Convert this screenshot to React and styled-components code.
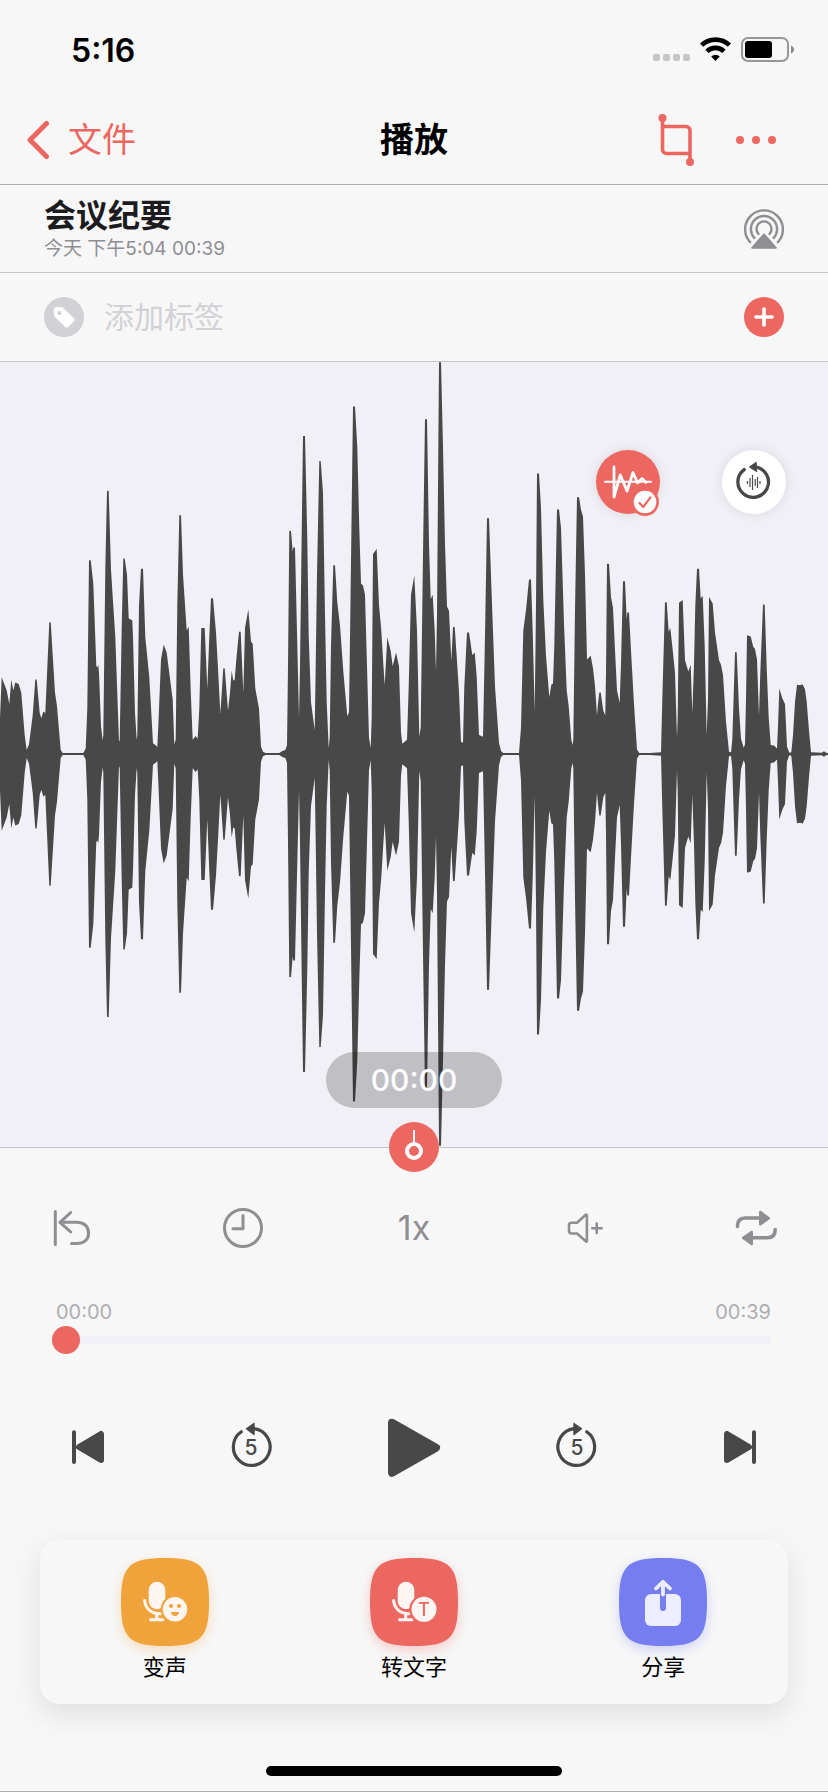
import React, { useState } from "react";
import styled, { createGlobalStyle } from "styled-components";

// Waveform envelope, sampled in three chunks. Each point is "x,level":
// x is in thirds of a pixel from `start`, amplitude is (base - level) / gain.
const WAVE_WIDTH = 828;
const WAVE_HEIGHT = 785;
const WAVE_MIDDLE = 392;

const chunks = [
    {
        start: 0,
        base: 882,
        gain: 2.24,
        points: "0,800 5,710 20,740 28,770 34,715 40,740 46,722 56,725 64,745 74,840 80,873 87,860 98,795 106,715 110,715 119,790 124,802 130,787 136,790 148,587 152,587 165,745 171,775 182,873 188,880 250,880 257,870 262,780 267,448 272,448 280,500 289,685 292,688 295,682 297,700 303,820 308,852 310,840 316,470 321,293 326,293 333,470 346,620 357,855 359,850 365,600 370,444 374,444 381,480 386,578 397,583 399,620 405,790 410,850 412,840 417,550 423,467 429,467 436,620 448,710 459,858 468,863 472,866 475,820 483,670 491,637 500,655 518,760 523,860 527,850 532,550 538,347 543,347 549,480 560,605 566,597 572,740 578,850 587,842 593,848 598,780 604,600 614,600 622,735 628,620 633,533 639,533 648,610 654,690 661,790 664,760 670,690 674,690 684,785 690,745 695,695 700,718 704,715 709,670 717,608 722,608 730,745 735,600 745,558 753,630 758,635 766,735 777,780 783,865 789,877 797,880",
    },
    {
        start: 270,
        base: 772,
        gain: 1.96,
        points: "0,770 28,770 37,766 46,764 51,755 54,600 58,335 63,335 68,375 70,367 75,367 78,450 87,700 90,600 94,400 99,149 105,149 112,350 116,540 123,670 134,725 137,600 141,420 148,198 152,198 159,260 165,500 170,670 176,760 179,740 183,560 190,402 195,402 202,475 210,520 220,610 232,698 237,690 241,500 249,91 255,91 262,170 268,330 273,438 279,442 285,460 291,600 297,740 302,760 305,700 309,380 320,370 327,480 334,530 340,595 344,637 352,543 362,570 368,600 378,573 387,600 393,730 397,752 404,748 411,744 416,640 423,460 433,422 441,530 448,738 452,720 459,380 465,116 471,116 477,360 482,468 488,460 494,530 498,610 501,500 507,4 513,4 519,170 525,360 531,483 537,492 544,590 549,523 554,523 561,590 567,650 573,748 579,750 583,640 591,534 597,534 607,578 614,573 620,620 627,735 639,738 645,540 651,310 657,310 664,440 675,640 687,750 693,766 700,770 747,770 753,720 760,530 768,490 777,430 783,430 788,530 794,690 798,480 801,222 807,222 813,290 820,470 828,580",
    },
    {
        start: 540,
        base: 882,
        gain: 2.24,
        points: "28,755 34,727 39,724 43,640 51,334 57,334 63,375 72,590 80,740 86,775 94,850 98,862 100,850 105,560 111,307 117,307 123,335 129,350 135,480 141,670 152,662 159,690 165,730 171,795 174,770 178,744 182,744 190,785 196,795 198,700 201,456 207,456 213,530 219,555 225,650 231,740 239,768 243,680 249,495 255,495 260,580 262,565 267,565 273,650 282,770 291,872 298,880 330,880 363,878 367,760 375,542 380,542 386,608 391,600 397,640 405,700 411,845 413,800 417,543 428,537 435,672 445,697 452,682 457,790 462,680 466,550 471,467 477,467 482,533 488,528 494,640 500,840 504,760 507,530 518,545 525,610 537,672 543,682 549,705 558,810 567,877 573,878 577,850 585,654 590,654 597,780 603,848 611,868 615,860 618,760 621,616 632,619 640,642 645,647 651,670 657,795 661,700 669,547 674,547 680,690 686,800 692,862 702,863 711,870 714,820 718,735 727,757 735,770 741,865 748,879 754,878 759,840 765,765 771,727 780,728 788,726 795,737 800,765 807,830 813,878 845,879 852,876 858,879 864,880",
    },
];

const envelope = chunks.flatMap(({ start, base, gain, points }) =>
    points.split(" ").map((pair) => {
        const [x, level] = pair.split(",").map(Number);
        return [start + x / 3, (base - level) / gain];
    })
);

const wavePoints = [
    ...envelope.map(([x, a]) => [x, WAVE_MIDDLE - a]),
    ...[...envelope].reverse().map(([x, a]) => [x, WAVE_MIDDLE + a]),
]
    .map(([x, y]) => `${x.toFixed(1)},${y.toFixed(1)}`)
    .join(" ");

const SQUIRCLE = "M0 44C0 8 8 0 44 0S88 8 88 44 80 88 44 88 0 80 0 44Z";

const StatusIcons = () => (
    <svg width="141" height="26" viewBox="0 0 141 26" aria-hidden="true">
        {[0, 10, 20, 30].map((x) => (
            <rect key={x} x={x} y="17" width="7" height="7" rx="2" fill="#c6c6c6" />
        ))}
        <g fill="none" stroke="#000" strokeWidth="4.6">
            <path d="M48.6 8.2a20 20 0 0 1 27.8 0" />
            <path d="M54 14.4a12 12 0 0 1 17 0" />
        </g>
        <path d="M58.2 19.4a6.4 6.4 0 0 1 8.6 0L62.5 24Z" />
        <rect
            x="89" y="1" width="46" height="23" rx="6"
            fill="none" stroke="#979797" strokeWidth="2"
        />
        <rect x="92" y="4" width="27" height="17" rx="3" />
        <path d="M138 8.5c4 1.8 4 6.2 0 8Z" fill="#8a8a8a" />
    </svg>
);

const ChevronIcon = () => (
    <svg width="24" height="40" viewBox="0 0 24 40" aria-hidden="true">
        <path
            d="M20.5 3.5 4 20 20.5 36.5"
            fill="none" stroke="currentColor" strokeWidth="5"
            strokeLinecap="round" strokeLinejoin="round"
        />
    </svg>
);

const CropIcon = () => (
    <svg width="40" height="54" viewBox="0 0 40 54" aria-hidden="true">
        <g fill="none" stroke="currentColor" strokeWidth="3.6">
            <path d="M6.5 5V36.5a4 4 0 0 0 4 4H34" />
            <path d="M6.5 13.5H30a4 4 0 0 1 4 4V49" />
        </g>
        <circle cx="6.5" cy="5" r="4" fill="currentColor" />
        <circle cx="34" cy="49" r="4" fill="currentColor" />
    </svg>
);

const DotsIcon = () => (
    <svg width="40" height="10" viewBox="0 0 40 10" aria-hidden="true">
        {[4, 20, 36].map((x) => (
            <circle key={x} cx={x} cy="5" r="4" fill="currentColor" />
        ))}
    </svg>
);

const AirplayIcon = () => (
    <svg width="40" height="40" viewBox="0 0 40 40" aria-hidden="true">
        <g fill="none" stroke="currentColor" strokeWidth="2.4" strokeLinecap="round">
            <path d="M6.2 33.2a18.9 18.9 0 1 1 27.6 0" />
            <path d="M10.3 28.9a13.1 13.1 0 1 1 19.4 0" />
            <path d="M14.4 24.9a7.5 7.5 0 1 1 11.2 0" />
        </g>
        <path
            d="M20 25.5 31.8 38.8H8.2Z"
            fill="currentColor" stroke="currentColor" strokeWidth="2" strokeLinejoin="round"
        />
    </svg>
);

const TagIcon = () => (
    <svg width="40" height="40" viewBox="0 0 40 40" aria-hidden="true">
        <circle cx="20" cy="20" r="20" fill="#d1d1d6" />
        <path
            d="M12.5 10H17.2a3 3 0 0 1 2.1.9L30.3 21.5a1.6 1.6 0 0 1 0 2.3L24.2 30a2 2 0 0 1-2.9 0L10.7 19.7a3 3 0 0 1-.9-2.1V13a3 3 0 0 1 2.7-3Z"
            fill="#fff"
        />
        <circle cx="15.3" cy="16" r="2" fill="#d1d1d6" />
    </svg>
);

const PlusIcon = () => (
    <svg width="40" height="40" viewBox="0 0 40 40" aria-hidden="true">
        <circle cx="20" cy="20" r="20" fill="#ec6760" />
        <path d="M12 20H28M20 12V28" stroke="#fff" strokeWidth="3.6" strokeLinecap="round" />
    </svg>
);

const TrimSilenceIcon = () => (
    <svg width="66" height="66" viewBox="0 0 66 66" aria-hidden="true">
        <g fill="none" stroke="#fff" strokeLinecap="round" strokeLinejoin="round">
            <path d="M9 31.7H55" strokeWidth="2" />
            <path d="M18 17V47L24.3 25 31 41 37 22.5 41.5 33 46 28.5 50 32.5" strokeWidth="2.8" />
        </g>
        <circle cx="49" cy="52" r="14" fill="#ec6760" />
        <circle cx="49" cy="52" r="11.3" fill="#fff" />
        <path
            d="M43.5 53 47.2 57 54.5 47.3"
            fill="none" stroke="#ec6760" strokeWidth="2.2"
            strokeLinecap="round" strokeLinejoin="round"
        />
    </svg>
);

const RepeatWaveIcon = () => (
    <svg width="64" height="64" viewBox="0 0 64 64" aria-hidden="true">
        <path
            d="M22.2 19.6A15.3 15.3 0 1 0 33 16.8"
            fill="none" stroke="#484849" strokeWidth="3.3" strokeLinecap="round"
        />
        <path
            d="M27.3 17 34.2 12.3 34.8 21.7Z"
            fill="#484849" stroke="#484849" strokeLinejoin="round"
        />
        <path
            d="M25.5 31V34M28 28V37M30.5 25V40M33.2 29V36M35.5 27V38M38 31V34"
            stroke="#484849" strokeWidth="1.2"
        />
    </svg>
);

const MarkerIcon = () => (
    <svg width="50" height="50" viewBox="0 0 50 50" aria-hidden="true">
        <path d="M25 8V21" stroke="#fff" strokeWidth="2" />
        <circle cx="25" cy="29" r="7" fill="none" stroke="#fff" strokeWidth="4" />
    </svg>
);

const ToolIcon = ({ children }) => (
    <svg
        width="40" height="40" viewBox="0 0 40 40" overflow="visible"
        fill="none" stroke="currentColor" strokeWidth="3"
        strokeLinecap="round" strokeLinejoin="round" aria-hidden="true"
    >
        {children}
    </svg>
);

const TransportIcon = ({ children }) => (
    <svg
        width="64" height="64" viewBox="0 0 64 64"
        fill="currentColor" stroke="currentColor"
        strokeLinecap="round" strokeLinejoin="round" aria-hidden="true"
    >
        {children}
    </svg>
);

const SkipIcon = () => (
    <TransportIcon>
        <path d="M18 16.3V46" strokeWidth="4" />
        <path d="M23 31 45 18V44Z" strokeWidth="6" />
    </TransportIcon>
);

const JumpArrow = () => (
    <>
        <path d="M22.3 15.8A18.4 18.4 0 1 0 35 12.7" fill="none" strokeWidth="3.2" />
        <path d="M27.5 12.8 35 7.5V18.5Z" strokeWidth="1.4" />
    </>
);

const JumpLabel = () => (
    <text x="32" y="39" fontSize="21" fontWeight="500" textAnchor="middle" stroke="none">
        5
    </text>
);

const Mic = ({ children }) => (
    <g fill="#fff5f2">
        <rect x="27.7" y="23.7" width="16.6" height="27.6" rx="8.3" />
        <path
            d="M23.6 42.5C24.5 50.5 30 55.7 39.5 55.7M35.7 56V61M29.5 61.7H42"
            fill="none" stroke="#fff5f2" strokeWidth="3" strokeLinecap="round"
        />
        {children}
    </g>
);

const VoiceIcon = () => (
    <svg width="88" height="88" viewBox="0 0 88 88" aria-hidden="true">
        <path d={SQUIRCLE} fill="#f1a33b" />
        <Mic>
            <circle cx="54" cy="51.3" r="14.3" fill="#f1a33b" />
            <circle cx="54" cy="51.3" r="12.2" />
            <circle cx="50" cy="48" r="2.1" fill="#f1a33b" />
            <circle cx="58" cy="48" r="2.1" fill="#f1a33b" />
            <path d="M50 54H58C58 59.3 50 59.3 50 54Z" fill="#f1a33b" />
        </Mic>
    </svg>
);

const TranscribeIcon = () => (
    <svg width="88" height="88" viewBox="0 0 88 88" aria-hidden="true">
        <path d={SQUIRCLE} fill="#ec6760" />
        <Mic>
            <circle cx="54" cy="51.3" r="14.7" fill="#ec6760" />
            <circle cx="54" cy="51.3" r="12.5" />
            <text x="54" y="58" fontSize="18" fontWeight="500" textAnchor="middle" fill="#ec6760">
                T
            </text>
        </Mic>
    </svg>
);

const ShareIcon = () => (
    <svg width="88" height="88" viewBox="0 0 88 88" aria-hidden="true">
        <path d={SQUIRCLE} fill="#757df0" />
        <rect x="26" y="36" width="36" height="32" rx="6" fill="#eceeff" />
        <g fill="none" strokeLinecap="round" strokeLinejoin="round">
            <path d="M44 36V50" stroke="#757df0" strokeWidth="6" />
            <path d="M44 25V36.5M37 30.5 44 23.8 51 30.5" stroke="#eceeff" strokeWidth="3.8" />
        </g>
    </svg>
);

const actions = [
    { label: "变声", icon: <VoiceIcon />, glow: "rgba(241, 163, 59, 0.3)" },
    { label: "转文字", icon: <TranscribeIcon />, glow: "rgba(236, 103, 96, 0.3)" },
    { label: "分享", icon: <ShareIcon />, glow: "rgba(117, 125, 240, 0.3)" },
];

function App() {
    const [position, setPosition] = useState(0);
    const [tag, setTag] = useState("");

    return (
        <Screen>
            <GlobalStyle />
            <StatusBar>
                <Clock>5:16</Clock>
                <StatusIcons />
            </StatusBar>

            <NavBar>
                <BackLink href="#files">
                    <ChevronIcon />
                    文件
                </BackLink>
                <NavTitle>播放</NavTitle>
                <NavActions>
                    <IconButton aria-label="裁剪"><CropIcon /></IconButton>
                    <IconButton aria-label="更多"><DotsIcon /></IconButton>
                </NavActions>
            </NavBar>

            <InfoRow>
                <div>
                    <RecordingName>会议纪要</RecordingName>
                    <RecordingMeta>今天 下午5:04 00:39</RecordingMeta>
                </div>
                <IconButton $color="#8e8e93" aria-label="隔空播放"><AirplayIcon /></IconButton>
            </InfoRow>

            <InfoRow>
                <TagLabel>
                    <TagIcon />
                    <TagInput
                        aria-label="添加标签"
                        placeholder="添加标签"
                        value={tag}
                        onChange={(e) => setTag(e.target.value)}
                    />
                </TagLabel>
                <IconButton aria-label="新建标签"><PlusIcon /></IconButton>
            </InfoRow>

            <WavePanel>
                <WaveSvg viewBox={`0 0 ${WAVE_WIDTH} ${WAVE_HEIGHT}`} preserveAspectRatio="none">
                    <polygon points={wavePoints} fill="#484849" />
                </WaveSvg>
                <FloatingTools>
                    <RoundButton $color="#ec6760" aria-label="跳过静音" aria-pressed="true">
                        <TrimSilenceIcon />
                    </RoundButton>
                    <RoundButton $color="#fff" aria-label="片段循环">
                        <RepeatWaveIcon />
                    </RoundButton>
                </FloatingTools>
                <Playhead>
                    <TimePill>00:00</TimePill>
                    <Marker aria-label="添加标记"><MarkerIcon /></Marker>
                </Playhead>
            </WavePanel>

            <ToolRow>
                <ToolButton aria-label="回到开头">
                    <ToolIcon>
                        <path d="M3.3 3.5V36.5M18.7 4.5 8 14.3 18.7 24" />
                        <path d="M8 14.3H25C32.5 14.3 36.6 19 36.6 25S32.5 35.5 25 35.5H19.5" />
                    </ToolIcon>
                </ToolButton>
                <ToolButton aria-label="定时">
                    <ToolIcon>
                        <circle cx="20" cy="20" r="18.5" />
                        <path d="M20 7.5V20.8H10" />
                    </ToolIcon>
                </ToolButton>
                <ToolButton>1x</ToolButton>
                <ToolButton aria-label="音量增强">
                    <ToolIcon>
                        <path
                            d="M6.5 14.7H12L20.5 7Q21.9 6 21.9 7.5V32.8Q21.9 34.3 20.5 33L12 25.5H6.5Q4 25.5 4 23V17.2Q4 14.7 6.5 14.7ZM27.3 20.3H36.7M31.7 15.5V25"
                            strokeWidth="2.6"
                        />
                    </ToolIcon>
                </ToolButton>
                <ToolButton aria-label="循环播放">
                    <ToolIcon>
                        <path d="M1.5 18.5Q1.5 10 9 10H24M39.2 21.5Q39.2 29.7 31.5 29.7H16" strokeWidth="3.6" />
                        <path d="M24.3 4 32.7 10.2 24.3 16.3ZM15.7 24 7.3 29.9 15.7 36Z" fill="currentColor" strokeWidth="2.6" />
                    </ToolIcon>
                </ToolButton>
            </ToolRow>

            <Progress>
                <Times>
                    <span>00:00</span>
                    <span>00:39</span>
                </Times>
                <Slider
                    type="range"
                    min="0"
                    max="39"
                    value={position}
                    aria-label="播放进度"
                    onChange={(e) => setPosition(Number(e.target.value))}
                />
            </Progress>

            <Transport>
                <TransportButton aria-label="上一个"><SkipIcon /></TransportButton>
                <TransportButton aria-label="后退5秒">
                    <TransportIcon>
                        <JumpArrow />
                        <JumpLabel />
                    </TransportIcon>
                </TransportButton>
                <TransportButton aria-label="播放">
                    <TransportIcon>
                        <path d="M10 6.7 54 31.8 10 56.8Z" strokeWidth="8" />
                    </TransportIcon>
                </TransportButton>
                <TransportButton aria-label="前进5秒">
                    <TransportIcon>
                        <g transform="matrix(-1 0 0 1 64 0)">
                            <JumpArrow />
                        </g>
                        <JumpLabel />
                    </TransportIcon>
                </TransportButton>
                <TransportButton $flip aria-label="下一个"><SkipIcon /></TransportButton>
            </Transport>

            <ActionCard>
                {actions.map(({ label, icon, glow }) => (
                    <ActionButton key={label} $glow={glow}>
                        {icon}
                        {label}
                    </ActionButton>
                ))}
            </ActionCard>

            <HomeArea>
                <HomeIndicator />
            </HomeArea>
        </Screen>
    );
}

const GlobalStyle = createGlobalStyle`
    * {
        box-sizing: border-box;
    }

    body {
        margin: 0;
        background: #f7f7f7;
        color: #000;
        font-family: Inter, "Noto Sans CJK SC", sans-serif;
    }

    button {
        margin: 0;
        padding: 0;
        border: none;
        background: none;
        color: inherit;
        font: inherit;
        cursor: pointer;
    }

    svg {
        display: block;
        flex: none;
    }
`;

const Screen = styled.main`
    min-height: 100vh;
    display: flex;
    flex-direction: column;
    border-bottom: 1px solid #adadad;
`;

const StatusBar = styled.div`
    height: 96px;
    padding: 4px 34px 0 71px;
    display: flex;
    align-items: center;
    justify-content: space-between;
`;

const Clock = styled.time`
    font-size: 32px;
    font-weight: 600;
`;

const NavBar = styled.header`
    height: 89px;
    padding: 0 52px 0 26px;
    display: grid;
    grid-template-columns: 1fr auto 1fr;
    align-items: center;
    border-bottom: 1px solid #adadad;
    font-size: 34px;
    line-height: 40px;
`;

const BackLink = styled.a`
    display: flex;
    align-items: center;
    gap: 18px;
    color: #ec6760;
    text-decoration: none;
`;

const NavTitle = styled.h1`
    margin: 0;
    padding-left: 26px;
    font-size: 34px;
    font-weight: 600;
`;

const NavActions = styled.div`
    display: flex;
    align-items: center;
    justify-content: flex-end;
    gap: 40px;
`;

const IconButton = styled.button`
    color: ${(p) => p.$color || "#ec6760"};
`;

const InfoRow = styled.section`
    min-height: 88px;
    padding: 0 44px;
    display: flex;
    align-items: center;
    justify-content: space-between;
    border-bottom: 1px solid #c6c6c8;

    & + & {
        min-height: 89px;
    }
`;

const RecordingName = styled.h2`
    margin: 0;
    color: #1c1c1e;
    font-size: 32px;
    font-weight: 600;
    line-height: 40px;
`;

const RecordingMeta = styled.p`
    margin: 0;
    color: #8e8e93;
    font-size: 19px;
    line-height: 26px;
`;

const TagLabel = styled.label`
    flex: 1;
    display: flex;
    align-items: center;
    gap: 20px;
`;

const TagInput = styled.input`
    flex: 1;
    min-width: 0;
    padding: 0;
    border: none;
    outline: none;
    background: none;
    color: #1c1c1e;
    font: inherit;
    font-size: 30px;

    &::placeholder {
        color: #d1d1d6;
        opacity: 1;
    }
`;

const WavePanel = styled.section`
    position: relative;
    border-bottom: 1px solid #c6c6c8;
    background: #f1f0f6;
`;

const WaveSvg = styled.svg`
    width: 100%;
    height: 785px;
`;

const FloatingTools = styled.div`
    position: absolute;
    top: 88px;
    right: 42px;
    display: flex;
    gap: 62px;
`;

const RoundButton = styled.button`
    width: 64px;
    height: 64px;
    border-radius: 50%;
    background: ${(p) => p.$color};
    box-shadow: 0 0 12px rgba(0, 0, 0, 0.1);
`;

// sits on the lower edge of the waveform
const Playhead = styled.div`
    position: absolute;
    left: 0;
    right: 0;
    bottom: -25px;
    display: flex;
    flex-direction: column;
    align-items: center;
    gap: 14px;
`;

const TimePill = styled.output`
    width: 176px;
    border-radius: 28px;
    background: rgba(0, 0, 0, 0.2);
    color: #fff;
    font-size: 30px;
    font-weight: 500;
    line-height: 56px;
    text-align: center;
`;

const Marker = styled.button`
    border-radius: 50%;
    background: #ec6760;
`;

const ToolRow = styled.div`
    padding: 60px 52px 0;
    display: flex;
    justify-content: space-between;
`;

const ToolButton = styled.button`
    width: 40px;
    height: 40px;
    color: #8e8e93;
    font-size: 34px;
    line-height: 40px;
`;

const Progress = styled.div`
    padding: 52px 57px 0 52px;
    display: flex;
    flex-direction: column;
`;

const Times = styled.div`
    padding-left: 4px;
    display: flex;
    justify-content: space-between;
    color: #aeaeb2;
    font-size: 20px;
    line-height: 24px;
`;

const Slider = styled.input`
    appearance: none;
    width: 100%;
    height: 28px;
    margin: 2px 0 0;
    background: none;

    &::-webkit-slider-runnable-track {
        height: 8px;
        border-radius: 4px;
        background: #f1f0f6;
    }

    &::-webkit-slider-thumb {
        appearance: none;
        width: 28px;
        height: 28px;
        margin-top: -10px;
        border-radius: 50%;
        background: #ec6760;
    }
`;

const Transport = styled.div`
    padding: 62px 56px 0;
    display: flex;
    justify-content: space-between;
`;

const TransportButton = styled.button`
    width: 64px;
    height: 64px;
    color: #484849;
    transform: ${(p) => (p.$flip ? "scaleX(-1)" : "none")};
`;

const ActionCard = styled.section`
    margin: 60px 40px 0;
    padding: 18px 0 20px;
    display: grid;
    grid-template-columns: repeat(3, 1fr);
    border-radius: 20px;
    background: #f7f7f7;
    box-shadow: 0 10px 30px rgba(0, 0, 0, 0.1);
`;

const ActionButton = styled.button`
    display: flex;
    flex-direction: column;
    align-items: center;
    gap: 4px;
    font-size: 22px;
    line-height: 34px;

    svg {
        filter: drop-shadow(0 4px 6px ${(p) => p.$glow});
    }
`;

const HomeArea = styled.footer`
    margin-top: auto;
    padding-bottom: 15px;
    display: flex;
    justify-content: center;
`;

const HomeIndicator = styled.div`
    width: 296px;
    height: 10px;
    border-radius: 5px;
    background: #000;
`;

export default App;
